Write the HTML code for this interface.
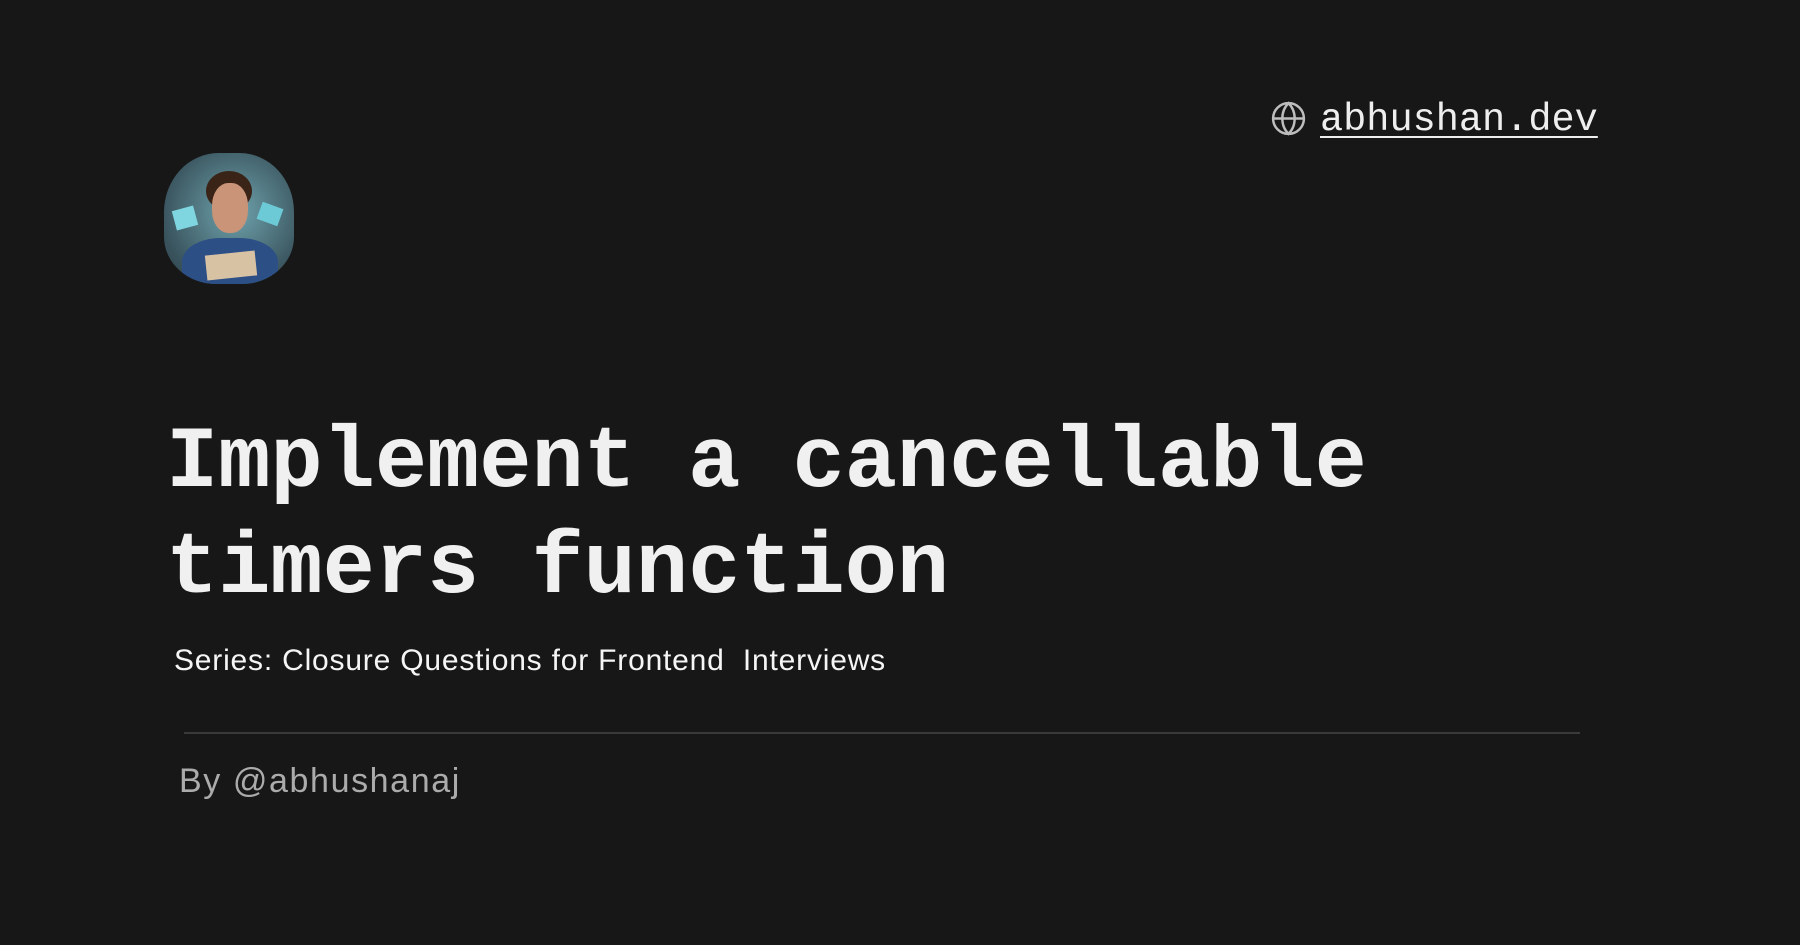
<!DOCTYPE html>
<html><head><meta charset="utf-8"><style>
html,body{margin:0;padding:0}
body{width:1800px;height:945px;background:#171717;position:relative;overflow:hidden;font-family:"Liberation Sans",sans-serif}
.t{position:absolute;white-space:nowrap}
</style></head><body>
<svg class="t" style="left:1270px;top:100px" width="37" height="37" viewBox="0 0 24 24" fill="none" stroke="#bdbdbd" stroke-width="1.6">
<circle cx="12" cy="12" r="10"/><path d="M2 12h20"/><path d="M12 2c3 3 4 6.5 4 10s-1 7-4 10c-3-3-4-6.5-4-10s1-7 4-10z"/></svg>
<div class="t" style="left:1320px;top:95px;font-family:'Liberation Mono',monospace;font-size:38.6px;color:#eee;line-height:50px;text-decoration:underline;text-underline-offset:6px;text-decoration-thickness:2px">abhushan.dev</div>
<div class="t" style="left:164px;top:153px;width:130px;height:131px;border-radius:42% 42% 40% 40%/45% 45% 36% 36%;overflow:hidden;background:radial-gradient(circle at 55% 45%,#6fa3ad,#3b5660 70%,#2a3b42)">
<div style="position:absolute;left:10px;top:55px;width:22px;height:20px;background:#7fd6e0;transform:rotate(-15deg)"></div>
<div style="position:absolute;left:95px;top:52px;width:22px;height:18px;background:#6ccad6;transform:rotate(20deg)"></div>
<div style="position:absolute;left:42px;top:18px;width:46px;height:40px;border-radius:50%;background:#3a2418"></div>
<div style="position:absolute;left:48px;top:30px;width:36px;height:50px;border-radius:45%;background:#c99478"></div>
<div style="position:absolute;left:18px;top:85px;width:96px;height:60px;border-radius:40% 40% 0 0;background:#2c4f86"></div>
<div style="position:absolute;left:42px;top:100px;width:50px;height:25px;background:#d8c2a4;transform:rotate(-6deg)"></div>
</div>
<div class="t" style="left:166px;top:411px;font-family:'Liberation Mono',monospace;font-weight:bold;font-size:87px;line-height:106px;color:#f0f0f0">Implement a cancellable<br>timers function</div>
<div class="t" style="left:174px;top:643px;font-size:30px;letter-spacing:0.8px;line-height:36px;color:#f5f5f5">Series: Closure Questions for Frontend&nbsp; Interviews</div>
<div class="t" style="left:184px;top:732px;width:1396px;height:2px;background:#3a3a3a"></div>
<div class="t" style="left:179px;top:761px;font-size:34px;letter-spacing:1.6px;line-height:40px;color:#ababab">By @abhushanaj</div>
</body></html>
